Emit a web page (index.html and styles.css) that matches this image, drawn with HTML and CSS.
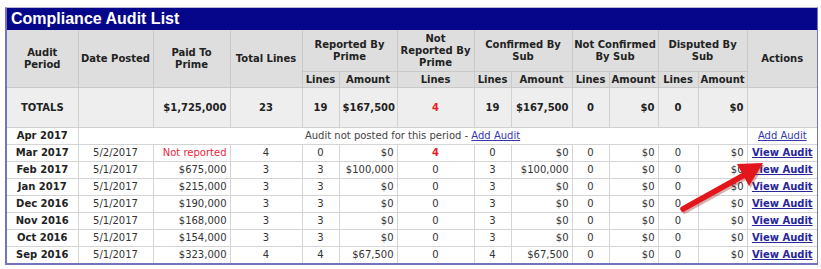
FILE: index.html
```html
<!DOCTYPE html>
<html>
<head>
<meta charset="utf-8">
<link rel="stylesheet" href="styles.css">
</head>
<body>
<div class="page">
  <div class="panel">
    <div class="title">Compliance Audit List</div>
    <table class="grid">
      <colgroup>
        <col class="c71"><col class="c75"><col class="c77"><col class="c72">
        <col class="c37"><col class="c58"><col class="c77">
        <col class="c37"><col class="c61"><col class="c37"><col class="c49">
        <col class="c40"><col class="c49"><col class="c70">
      </colgroup>
      <thead>
        <tr class="h1">
          <th rowspan="2">Audit<br>Period</th>
          <th rowspan="2">Date Posted</th>
          <th rowspan="2">Paid To<br>Prime</th>
          <th rowspan="2">Total Lines</th>
          <th colspan="2">Reported By<br>Prime</th>
          <th>Not<br>Reported By<br>Prime</th>
          <th colspan="2">Confirmed By<br>Sub</th>
          <th colspan="2">Not Confirmed<br>By Sub</th>
          <th colspan="2">Disputed By<br>Sub</th>
          <th rowspan="2">Actions</th>
        </tr>
        <tr class="h2">
          <th>Lines</th><th>Amount</th><th>Lines</th><th>Lines</th><th>Amount</th><th>Lines</th><th>Amount</th><th>Lines</th><th>Amount</th>
        </tr>
      </thead>
      <tbody>
        <tr class="totals">
          <td class="c">TOTALS</td><td></td><td class="r">$1,725,000</td><td class="c">23</td>
          <td class="c">19</td><td class="r">$167,500</td><td class="c red">4</td>
          <td class="c">19</td><td class="r">$167,500</td><td class="c">0</td><td class="r">$0</td>
          <td class="c">0</td><td class="r">$0</td><td></td>
        </tr>
        <tr>
          <td class="c b">Apr 2017</td>
          <td colspan="12" class="c note">Audit not posted for this period - <a class="add" href="#">Add Audit</a></td>
          <td class="c"><a class="add" href="#">Add Audit</a></td>
        </tr>
        <tr>
          <td class="c b">Mar 2017</td><td class="c">5/2/2017</td><td class="r nr">Not reported</td><td class="c">4</td>
          <td class="c">0</td><td class="r">$0</td><td class="c red b">4</td>
          <td class="c">0</td><td class="r">$0</td><td class="c">0</td><td class="r">$0</td>
          <td class="c">0</td><td class="r">$0</td><td class="c"><a class="view" href="#">View Audit</a></td>
        </tr>
        <tr>
          <td class="c b">Feb 2017</td><td class="c">5/1/2017</td><td class="r">$675,000</td><td class="c">3</td>
          <td class="c">3</td><td class="r">$100,000</td><td class="c">0</td>
          <td class="c">3</td><td class="r">$100,000</td><td class="c">0</td><td class="r">$0</td>
          <td class="c">0</td><td class="r">$0</td><td class="c"><a class="view" href="#">View Audit</a></td>
        </tr>
        <tr>
          <td class="c b">Jan 2017</td><td class="c">5/1/2017</td><td class="r">$215,000</td><td class="c">3</td>
          <td class="c">3</td><td class="r">$0</td><td class="c">0</td>
          <td class="c">3</td><td class="r">$0</td><td class="c">0</td><td class="r">$0</td>
          <td class="c">0</td><td class="r">$0</td><td class="c"><a class="view" href="#">View Audit</a></td>
        </tr>
        <tr>
          <td class="c b">Dec 2016</td><td class="c">5/1/2017</td><td class="r">$190,000</td><td class="c">3</td>
          <td class="c">3</td><td class="r">$0</td><td class="c">0</td>
          <td class="c">3</td><td class="r">$0</td><td class="c">0</td><td class="r">$0</td>
          <td class="c">0</td><td class="r">$0</td><td class="c"><a class="view" href="#">View Audit</a></td>
        </tr>
        <tr>
          <td class="c b">Nov 2016</td><td class="c">5/1/2017</td><td class="r">$168,000</td><td class="c">3</td>
          <td class="c">3</td><td class="r">$0</td><td class="c">0</td>
          <td class="c">3</td><td class="r">$0</td><td class="c">0</td><td class="r">$0</td>
          <td class="c">0</td><td class="r">$0</td><td class="c"><a class="view" href="#">View Audit</a></td>
        </tr>
        <tr>
          <td class="c b">Oct 2016</td><td class="c">5/1/2017</td><td class="r">$154,000</td><td class="c">3</td>
          <td class="c">3</td><td class="r">$0</td><td class="c">0</td>
          <td class="c">3</td><td class="r">$0</td><td class="c">0</td><td class="r">$0</td>
          <td class="c">0</td><td class="r">$0</td><td class="c"><a class="view" href="#">View Audit</a></td>
        </tr>
        <tr>
          <td class="c b">Sep 2016</td><td class="c">5/1/2017</td><td class="r">$323,000</td><td class="c">4</td>
          <td class="c">4</td><td class="r">$67,500</td><td class="c">0</td>
          <td class="c">4</td><td class="r">$67,500</td><td class="c">0</td><td class="r">$0</td>
          <td class="c">0</td><td class="r">$0</td><td class="c"><a class="view" href="#">View Audit</a></td>
        </tr>
      </tbody>
    </table>
  </div>
  <svg class="arrow" width="821" height="269" viewBox="0 0 821 269">
    <g fill="#8a1a1a" opacity="0.35" transform="translate(1.5,2)">
      <line x1="683" y1="209" x2="746" y2="174" stroke="#8a1a1a" stroke-width="5.5" stroke-linecap="round"/>
      <polygon points="763,163 737,164 749,186"/>
    </g>
    <line x1="683" y1="209" x2="746" y2="174" stroke="#e3161b" stroke-width="5.5" stroke-linecap="round"/>
    <polygon points="763,163 737,164 749,186" fill="#e3161b"/>
  </svg>
</div>
</body>
</html>
```
FILE: styles.css
```css
body {
  margin: 0;
  background: #ffffff;
  font-family: "DejaVu Sans", Verdana, sans-serif;
  font-size: 10px;
  color: #333333;
}

.page {
  position: relative;
  width: 821px;
  height: 269px;
  overflow: hidden;
}

.panel {
  margin: 7px 0 0 5px;
  width: 813px;
  box-sizing: border-box;
  border: 1px solid #7474bd;
  border-left-width: 2px;
  border-bottom-width: 2px;
  border-top-color: #b8b8dc;
}

.title {
  background: #06068a;
  color: #ffffff;
  font-family: "Liberation Sans", Arial, sans-serif;
  font-weight: bold;
  font-size: 16px;
  height: 22px;
  line-height: 22px;
  padding-left: 4px;
}

.grid {
  width: 810px;
  table-layout: fixed;
  border-collapse: collapse;
  border-style: hidden;
}

.c71 { width: 71px; }
.c75 { width: 75px; }
.c77 { width: 77px; }
.c72 { width: 72px; }
.c37 { width: 37px; }
.c58 { width: 58px; }
.c61 { width: 61px; }
.c49 { width: 49px; }
.c40 { width: 40px; }
.c70 { width: 70px; }

.grid th {
  background: #dedede;
  border: 1px solid #c9c9c9;
  color: #222222;
  font-weight: bold;
  text-align: center;
  line-height: 12px;
  padding: 0 1px;
  white-space: nowrap;
}

.h1 th { height: 41px; }
.h2 th { height: 15px; }

.grid td {
  border: 1px solid #d4d4d4;
  height: 16px;
  padding: 0 3px;
  line-height: 12px;
  white-space: nowrap;
  overflow: hidden;
}

.totals td {
  background: #eeeeee;
  height: 39px;
  font-weight: bold;
  color: #222222;
  border-color: #d0d0d0;
}

.c { text-align: center; }
.r { text-align: right; }
.b { font-weight: bold; color: #222222; }
.nr { color: #e8283c; }
.note { color: #444444; }
.grid .red { color: #e8202a; }

.add {
  color: #3535b0;
  text-decoration: underline;
}

.view {
  color: #26269a;
  font-weight: bold;
  text-decoration: underline;
}

.arrow {
  position: absolute;
  left: 0;
  top: 0;
  pointer-events: none;
}
```
